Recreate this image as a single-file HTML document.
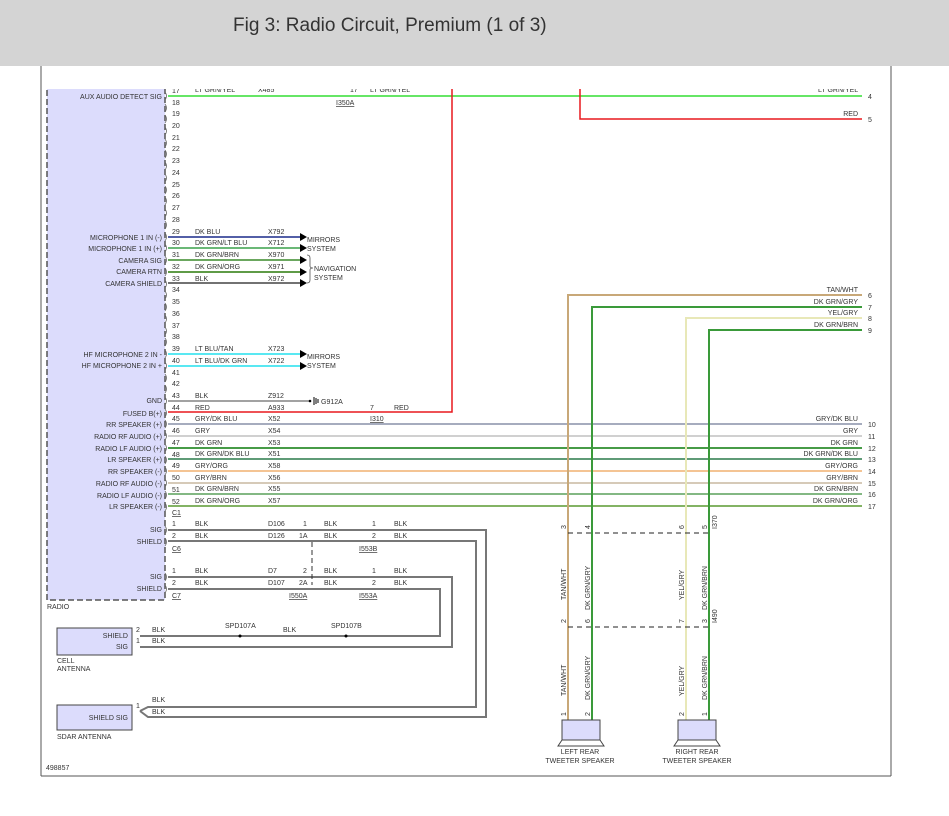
<!DOCTYPE html>
<html><head><style>
body{margin:0;width:949px;height:816px;background:#fff;overflow:hidden;font-family:"Liberation Sans",sans-serif}
#hd{position:absolute;left:0;top:0;width:949px;height:66px;background:#d4d4d4;z-index:2}
#hd span{position:absolute;left:233px;top:15px;font-size:19px;color:#333}
svg{position:absolute;left:0;top:0}
text{font-family:"Liberation Sans",sans-serif;font-size:7px;fill:#333}
.r{text-anchor:end}
</style></head><body>
<div id="hd"><span>Fig 3: Radio Circuit, Premium (1 of 3)</span></div>
<svg width="949" height="816" viewBox="0 0 949 816">
<rect x="47" y="80" width="118" height="520" fill="#dcdcfc" stroke="#555" stroke-width="1.5" stroke-dasharray="6,3"/>
<text x="47" y="609">RADIO</text>
<text x="46" y="770">498857</text>
<text class="r" x="162" y="99">AUX AUDIO DETECT SIG</text>
<text class="r" x="162" y="240">MICROPHONE 1 IN (-)</text>
<text class="r" x="162" y="251">MICROPHONE 1 IN (+)</text>
<text class="r" x="162" y="263">CAMERA SIG</text>
<text class="r" x="162" y="274">CAMERA RTN</text>
<text class="r" x="162" y="286">CAMERA SHIELD</text>
<text class="r" x="162" y="357">HF MICROPHONE 2 IN -</text>
<text class="r" x="162" y="368">HF MICROPHONE 2 IN +</text>
<text class="r" x="162" y="403">GND</text>
<text class="r" x="162" y="416">FUSED B(+)</text>
<text class="r" x="162" y="427">RR SPEAKER (+)</text>
<text class="r" x="162" y="439">RADIO RF AUDIO (+)</text>
<text class="r" x="162" y="451">RADIO LF AUDIO (+)</text>
<text class="r" x="162" y="462">LR SPEAKER (+)</text>
<text class="r" x="162" y="474">RR SPEAKER (-)</text>
<text class="r" x="162" y="486">RADIO RF AUDIO (-)</text>
<text class="r" x="162" y="498">RADIO LF AUDIO (-)</text>
<text class="r" x="162" y="509">LR SPEAKER (-)</text>
<text class="r" x="162" y="532">SIG</text>
<text class="r" x="162" y="544">SHIELD</text>
<text class="r" x="162" y="579">SIG</text>
<text class="r" x="162" y="591">SHIELD</text>
<g>
<text x="172" y="93">17</text>
<text x="172" y="105">18</text><text x="172" y="116">19</text><text x="172" y="128">20</text><text x="172" y="140">21</text><text x="172" y="151">22</text><text x="172" y="163">23</text><text x="172" y="175">24</text><text x="172" y="187">25</text><text x="172" y="198">26</text><text x="172" y="210">27</text><text x="172" y="222">28</text><text x="172" y="234">29</text><text x="172" y="245">30</text><text x="172" y="257">31</text><text x="172" y="269">32</text><text x="172" y="281">33</text><text x="172" y="292">34</text><text x="172" y="304">35</text><text x="172" y="316">36</text><text x="172" y="328">37</text><text x="172" y="339">38</text><text x="172" y="351">39</text><text x="172" y="363">40</text><text x="172" y="375">41</text><text x="172" y="386">42</text><text x="172" y="398">43</text><text x="172" y="410">44</text><text x="172" y="421">45</text><text x="172" y="433">46</text><text x="172" y="445">47</text><text x="172" y="457">48</text><text x="172" y="468">49</text><text x="172" y="480">50</text><text x="172" y="492">51</text><text x="172" y="504">52</text>
<text x="172" y="515" text-decoration="underline">C1</text>
<text x="172" y="526">1</text><text x="172" y="538">2</text><text x="172" y="551" text-decoration="underline">C6</text>
<text x="172" y="573">1</text><text x="172" y="585">2</text><text x="172" y="598" text-decoration="underline">C7</text>
</g>
<g stroke="#666" fill="none" stroke-width="0.8">
<path d="M165 92 q3 4 0 8 M165 104 q3 4 0 8 M165 115 q3 4 0 8 M165 127 q3 4 0 8 M165 139 q3 4 0 8 M165 150 q3 4 0 8 M165 162 q3 4 0 8 M165 174 q3 4 0 8 M165 186 q3 4 0 8 M165 197 q3 4 0 8 M165 209 q3 4 0 8 M165 221 q3 4 0 8 M165 233 q3 4 0 8 M165 244 q3 4 0 8 M165 256 q3 4 0 8 M165 268 q3 4 0 8 M165 280 q3 4 0 8 M165 291 q3 4 0 8 M165 303 q3 4 0 8 M165 315 q3 4 0 8 M165 327 q3 4 0 8 M165 338 q3 4 0 8 M165 350 q3 4 0 8 M165 362 q3 4 0 8 M165 374 q3 4 0 8 M165 385 q3 4 0 8 M165 397 q3 4 0 8 M165 409 q3 4 0 8 M165 420 q3 4 0 8 M165 432 q3 4 0 8 M165 444 q3 4 0 8 M165 456 q3 4 0 8 M165 467 q3 4 0 8 M165 479 q3 4 0 8 M165 491 q3 4 0 8 M165 503 q3 4 0 8 M165 526 q3 4 0 8 M165 538 q3 4 0 8 M165 573 q3 4 0 8 M165 585 q3 4 0 8"/>
</g>
<line x1="168" y1="96" x2="862" y2="96" stroke="#33dd33" stroke-width="1.5"/>
<text x="195" y="92">LT GRN/YEL</text><text x="258" y="92">X485</text><text x="350" y="92">17</text><text x="370" y="92">LT GRN/YEL</text><text x="818" y="92">LT GRN/YEL</text>
<text x="336" y="105" text-decoration="underline">I350A</text>
<text x="868" y="99">4</text>
<polyline points="452,80 452,412 168,412" stroke="#e8181e" stroke-width="1.5" fill="none"/>
<polyline points="580,80 580,119 862,119" stroke="#e8181e" stroke-width="1.5" fill="none"/>
<text class="r" x="858" y="116">RED</text><text x="868" y="122">5</text>
<g stroke-width="1.5" fill="none">
<line x1="168" y1="237" x2="300" y2="237" stroke="#1a2a8a"/>
<line x1="168" y1="248" x2="300" y2="248" stroke="#3aa04a"/>
<line x1="168" y1="260" x2="300" y2="260" stroke="#3a8a2a"/>
<line x1="168" y1="272" x2="300" y2="272" stroke="#2a7a0a"/>
<line x1="168" y1="283" x2="300" y2="283" stroke="#444"/>
<line x1="168" y1="354" x2="300" y2="354" stroke="#22e0ee"/>
<line x1="168" y1="366" x2="300" y2="366" stroke="#22e0ee"/>
<line x1="168" y1="401" x2="310" y2="401" stroke="#444" stroke-width="1"/>
</g>
<g fill="#000">
<path d="M300 233 l7 4 l-7 4z M300 244 l7 4 l-7 4z M300 256 l7 4 l-7 4z M300 268 l7 4 l-7 4z M300 279 l7 4 l-7 4z M300 350 l7 4 l-7 4z M300 362 l7 4 l-7 4z"/>
<circle cx="310" cy="401" r="1.3"/>
</g>
<path d="M314 397 v8 M316 398 v6 M318 399 v4" stroke="#000" fill="none"/>
<path d="M307 255 q3 0 3 3 v8 q0 2 3 2 q-3 0 -3 2 v10 q0 3 -3 3" stroke="#555" fill="none" stroke-width="0.8"/>
<text x="195" y="234">DK BLU</text><text x="268" y="234">X792</text>
<text x="195" y="245">DK GRN/LT BLU</text><text x="268" y="245">X712</text>
<text x="195" y="257">DK GRN/BRN</text><text x="268" y="257">X970</text>
<text x="195" y="269">DK GRN/ORG</text><text x="268" y="269">X971</text>
<text x="195" y="281">BLK</text><text x="268" y="281">X972</text>
<text x="307" y="242">MIRRORS</text><text x="307" y="251">SYSTEM</text>
<text x="314" y="271">NAVIGATION</text><text x="314" y="280">SYSTEM</text>
<text x="195" y="351">LT BLU/TAN</text><text x="268" y="351">X723</text>
<text x="195" y="363">LT BLU/DK GRN</text><text x="268" y="363">X722</text>
<text x="307" y="359">MIRRORS</text><text x="307" y="368">SYSTEM</text>
<text x="195" y="398">BLK</text><text x="268" y="398">Z912</text><text x="321" y="404">G912A</text>
<text x="195" y="410">RED</text><text x="268" y="410">A933</text>
<text x="370" y="410">7</text><text x="394" y="410">RED</text><text x="370" y="421" text-decoration="underline">I310</text>
<g stroke-width="1.5">
<line x1="168" y1="424" x2="862" y2="424" stroke="#8890a8"/>
<line x1="168" y1="436" x2="862" y2="436" stroke="#c0c0c0"/>
<line x1="168" y1="448" x2="862" y2="448" stroke="#0a7a0a"/>
<line x1="168" y1="459" x2="862" y2="459" stroke="#2a7a4a"/>
<line x1="168" y1="471" x2="862" y2="471" stroke="#f0b070"/>
<line x1="168" y1="483" x2="862" y2="483" stroke="#c8b8a0"/>
<line x1="168" y1="494" x2="862" y2="494" stroke="#5aa05a"/>
<line x1="168" y1="506" x2="862" y2="506" stroke="#5a9a30"/>
</g>
<text x="195" y="421">GRY/DK BLU</text><text x="268" y="421">X52</text>
<text x="195" y="433">GRY</text><text x="268" y="433">X54</text>
<text x="195" y="445">DK GRN</text><text x="268" y="445">X53</text>
<text x="195" y="456">DK GRN/DK BLU</text><text x="268" y="456">X51</text>
<text x="195" y="468">GRY/ORG</text><text x="268" y="468">X58</text>
<text x="195" y="480">GRY/BRN</text><text x="268" y="480">X56</text>
<text x="195" y="491">DK GRN/BRN</text><text x="268" y="491">X55</text>
<text x="195" y="503">DK GRN/ORG</text><text x="268" y="503">X57</text>
<text class="r" x="858" y="421">GRY/DK BLU</text><text class="r" x="858" y="433">GRY</text><text class="r" x="858" y="445">DK GRN</text><text class="r" x="858" y="456">DK GRN/DK BLU</text><text class="r" x="858" y="468">GRY/ORG</text><text class="r" x="858" y="480">GRY/BRN</text><text class="r" x="858" y="491">DK GRN/BRN</text><text class="r" x="858" y="503">DK GRN/ORG</text>
<text class="r" x="858" y="292">TAN/WHT</text><text class="r" x="858" y="304">DK GRN/GRY</text><text class="r" x="858" y="315">YEL/GRY</text><text class="r" x="858" y="327">DK GRN/BRN</text>
<text x="868" y="427">10</text><text x="868" y="439">11</text><text x="868" y="451">12</text><text x="868" y="462">13</text><text x="868" y="474">14</text><text x="868" y="486">15</text><text x="868" y="497">16</text><text x="868" y="509">17</text>
<text x="868" y="298">6</text><text x="868" y="310">7</text><text x="868" y="321">8</text><text x="868" y="333">9</text>
<g fill="none" stroke-width="2">
<polyline points="862,295 568,295 568,720" stroke="#c8a878"/>
<polyline points="862,307 592,307 592,720" stroke="#3a9a3a"/>
<polyline points="862,318 686,318 686,720" stroke="#e8e8b8"/>
<polyline points="862,330 709,330 709,720" stroke="#3a9a3a"/>
</g>
<g stroke="#222" stroke-dasharray="5,4" fill="none"><line x1="568" y1="533" x2="712" y2="533"/><line x1="568" y1="627" x2="712" y2="627"/></g>
<g transform="rotate(-90)">
<text x="-600" y="566">TAN/WHT</text><text x="-610" y="590">DK GRN/GRY</text><text x="-600" y="684">YEL/GRY</text><text x="-610" y="707">DK GRN/BRN</text>
<text x="-696" y="566">TAN/WHT</text><text x="-700" y="590">DK GRN/GRY</text><text x="-696" y="684">YEL/GRY</text><text x="-700" y="707">DK GRN/BRN</text>
<text x="-529" y="566">3</text><text x="-529" y="590">4</text><text x="-529" y="684">6</text><text x="-529" y="707">5</text>
<text x="-623" y="566">2</text><text x="-623" y="590">6</text><text x="-623" y="684">7</text><text x="-623" y="707">3</text>
<text x="-529" y="717">I370</text><text x="-623" y="717">I490</text>
<text x="-716" y="566">1</text><text x="-716" y="590">2</text><text x="-716" y="684">2</text><text x="-716" y="707">1</text>
</g>
<rect x="562" y="720" width="38" height="20" fill="#dcdcfc" stroke="#444"/>
<rect x="678" y="720" width="38" height="20" fill="#dcdcfc" stroke="#444"/>
<path d="M562 740 l-4 6 h46 l-4 -6 M678 740 l-4 6 h46 l-4 -6" stroke="#444" fill="none"/>
<text x="580" y="754" text-anchor="middle">LEFT REAR</text><text x="580" y="763" text-anchor="middle">TWEETER SPEAKER</text>
<text x="697" y="754" text-anchor="middle">RIGHT REAR</text><text x="697" y="763" text-anchor="middle">TWEETER SPEAKER</text>
<g fill="none" stroke="#777" stroke-width="2">
<polyline points="168,530 486,530 486,717 148,717 140,711"/>
<polyline points="168,541 476,541 476,707 148,707 140,711"/>
<polyline points="168,577 452,577 452,647 140,647"/>
<polyline points="168,589 440,589 440,636 140,636"/>
</g>
<line x1="312" y1="542" x2="312" y2="585" stroke="#333" stroke-dasharray="5,3"/>
<text x="195" y="526">BLK</text><text x="268" y="526">D106</text><text x="303" y="526">1</text><text x="324" y="526">BLK</text><text x="372" y="526">1</text><text x="394" y="526">BLK</text>
<text x="195" y="538">BLK</text><text x="268" y="538">D126</text><text x="299" y="538">1A</text><text x="324" y="538">BLK</text><text x="372" y="538">2</text><text x="394" y="538">BLK</text>
<text x="359" y="551" text-decoration="underline">I553B</text>
<text x="195" y="573">BLK</text><text x="268" y="573">D7</text><text x="303" y="573">2</text><text x="324" y="573">BLK</text><text x="372" y="573">1</text><text x="394" y="573">BLK</text>
<text x="195" y="585">BLK</text><text x="268" y="585">D107</text><text x="299" y="585">2A</text><text x="324" y="585">BLK</text><text x="372" y="585">2</text><text x="394" y="585">BLK</text>
<text x="289" y="598" text-decoration="underline">I550A</text><text x="359" y="598" text-decoration="underline">I553A</text>
<rect x="57" y="628" width="75" height="27" fill="#dcdcfc" stroke="#444"/>
<text class="r" x="128" y="638">SHIELD</text><text class="r" x="128" y="649">SIG</text>
<text x="136" y="632">2</text><text x="136" y="643">1</text><text x="152" y="632">BLK</text><text x="152" y="643">BLK</text>
<text x="225" y="628">SPD107A</text><text x="283" y="632">BLK</text><text x="331" y="628">SPD107B</text>
<circle cx="240" cy="636" r="1.5" fill="#000"/><circle cx="346" cy="636" r="1.5" fill="#000"/>
<text x="57" y="663">CELL</text><text x="57" y="671">ANTENNA</text>
<rect x="57" y="705" width="75" height="25" fill="#dcdcfc" stroke="#444"/>
<text class="r" x="128" y="720">SHIELD SIG</text>
<text x="136" y="708">1</text><text x="152" y="702">BLK</text><text x="152" y="714">BLK</text>
<text x="57" y="739">SDAR ANTENNA</text>
<rect x="41" y="66" width="851" height="23" fill="#fff"/>
<g stroke="#555" stroke-width="1" fill="none">
<line x1="41" y1="66" x2="41" y2="776"/><line x1="891" y1="66" x2="891" y2="776"/><line x1="41" y1="776" x2="891" y2="776"/>
</g>
</svg>
</body></html>
